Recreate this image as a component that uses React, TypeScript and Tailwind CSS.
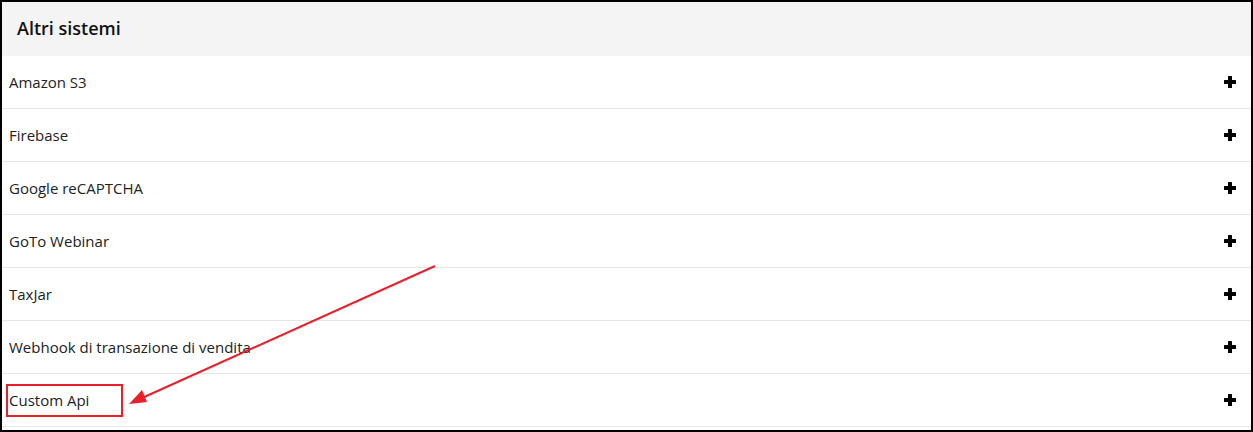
import React from "react";

const rows = [
  "Amazon S3",
  "Firebase",
  "Google reCAPTCHA",
  "GoTo Webinar",
  "TaxJar",
  "Webhook di transazione di vendita",
  "Custom Api",
];

function Plus() {
  return (
    <svg width="12" height="12" viewBox="0 0 12 12">
      <rect x="4" y="0" width="4" height="12" rx="0.6" fill="#000" />
      <rect x="0" y="4" width="12" height="4" rx="0.6" fill="#000" />
    </svg>
  );
}

export default function App() {
  return (
    <div
      className="relative w-[1253px] h-[432px] border-2 border-black bg-white overflow-hidden"
      style={{ fontFamily: '"Open Sans", "Noto Sans", sans-serif' }}
    >
      <div className="h-[54px] bg-[#f4f4f4] flex items-center pl-[15px] pb-[2px]">
        <span className="text-[18px] font-semibold text-[#111]">Altri sistemi</span>
      </div>
      {rows.map((r, i) => (
        <div
          key={r}
          className="relative h-[53px] border-b border-[#e6e6e6] flex items-center justify-between pl-[7px] pr-[15px]"
        >
          <span className="text-[15px] text-[#222]">{r}</span>
          <Plus />
          {i === rows.length - 1 && (
            <span className="absolute left-[4px] top-[10px] w-[117px] h-[33px] border-2 border-[#e8202a]" />
          )}
        </div>
      ))}
      <svg
        className="absolute left-0 top-0 pointer-events-none"
        width="1253"
        height="432"
      >
        <line x1="433" y1="264" x2="140" y2="396" stroke="#ea1f2a" strokeWidth="2" />
        <polygon points="127,402 140,388 145,400" fill="#ea1f2a" />
      </svg>
    </div>
  );
}
